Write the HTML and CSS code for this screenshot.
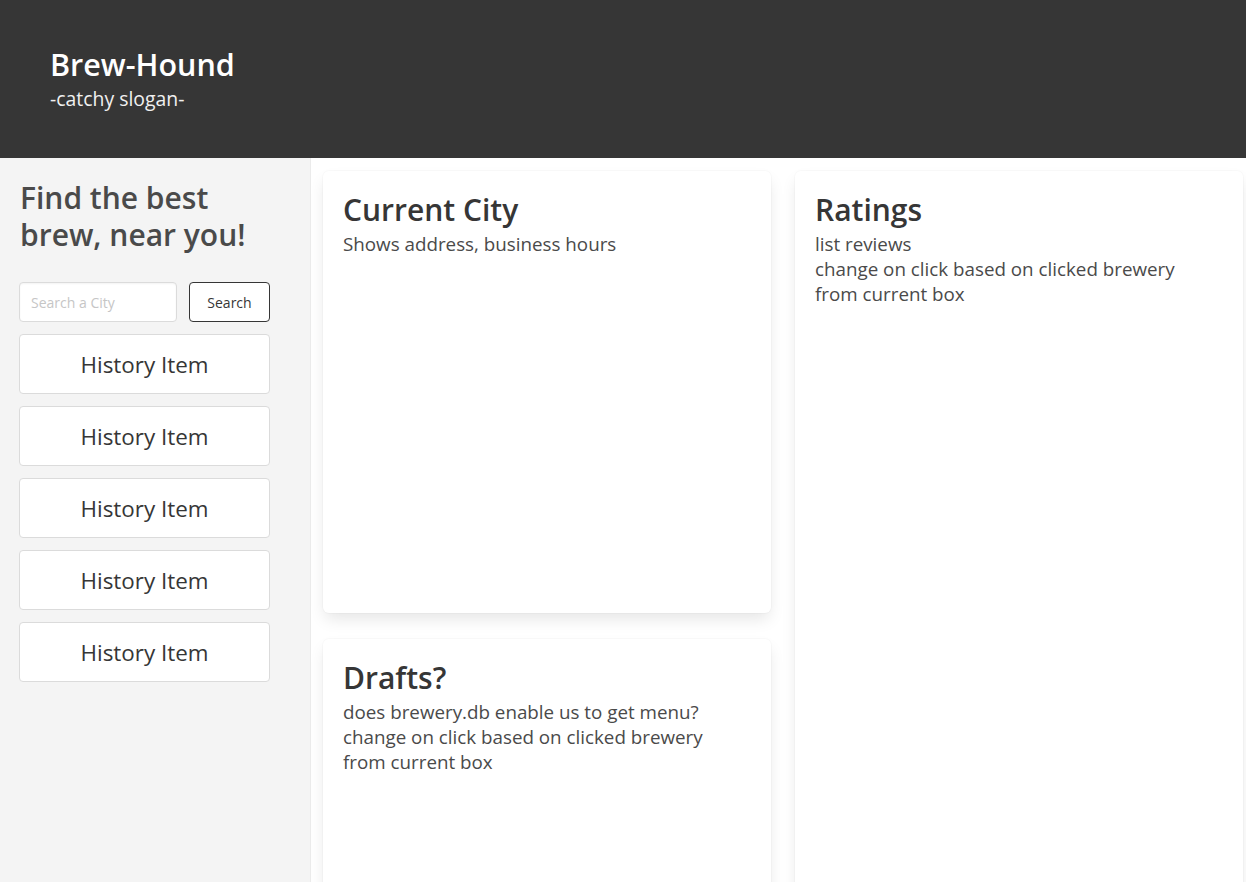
FILE: index.html
```html
<!DOCTYPE html>
<html lang="en">
<head>
<meta charset="utf-8">
<title>Brew-Hound</title>
<link rel="stylesheet" href="styles.css">
</head>
<body>
<header class="hero">
  <h1 class="hero-title">Brew-Hound</h1>
  <p class="hero-subtitle">-catchy slogan-</p>
</header>
<div class="layout">
  <aside class="sidebar">
    <h2 class="side-title">Find the best brew, near you!</h2>
    <form class="search">
      <input class="search-input" type="text" placeholder="Search a City">
      <button class="search-btn" type="button">Search</button>
    </form>
    <ul class="history">
      <li class="history-item">History Item</li>
      <li class="history-item">History Item</li>
      <li class="history-item">History Item</li>
      <li class="history-item">History Item</li>
      <li class="history-item">History Item</li>
    </ul>
  </aside>
  <main class="main">
    <div class="col">
      <section class="box box-city">
        <h3 class="box-title">Current City</h3>
        <p class="box-text">Shows address, business hours</p>
      </section>
      <section class="box box-drafts">
        <h3 class="box-title">Drafts?</h3>
        <p class="box-text">does brewery.db enable us to get menu?<br>change on click based on clicked brewery from current box</p>
      </section>
    </div>
    <div class="col">
      <section class="box box-ratings">
        <h3 class="box-title">Ratings</h3>
        <p class="box-text">list reviews<br>change on click based on clicked brewery from current box</p>
      </section>
    </div>
  </main>
</div>
</body>
</html>
```
FILE: styles.css
```css
* { box-sizing: border-box; }
html, body { margin: 0; padding: 0; }
body {
  font-family: "Open Sans", "Noto Sans", "Liberation Sans", sans-serif;
  color: #4a4a4a;
  background: #fff;
  height: 882px;
  overflow: hidden;
}
.hero {
  background: #363636;
  height: 158px;
  padding: 46px 50px 0;
}
.hero-title {
  margin: 0;
  color: #fff;
  font-size: 30.5px;
  font-weight: 600;
  line-height: 36px;
}
.hero-subtitle {
  margin: 4px 0 0;
  color: #f0f0f0;
  font-size: 19.4px;
  line-height: 25px;
}
.layout {
  display: flex;
  height: 724px;
  overflow: hidden;
}
.sidebar {
  width: 311px;
  flex: none;
  background: #f4f4f4;
  border-right: 1px solid #ebebeb;
  padding: 21px 40px 0 19px;
}
.side-title {
  margin: 0;
  font-size: 30px;
  font-weight: 600;
  line-height: 37px;
  color: #4a4a4a;
  padding-left: 1px;
}
.search {
  display: flex;
  gap: 12px;
  margin-top: 29px;
}
.search-input {
  width: 158px;
  height: 40px;
  border: 1px solid #dbdbdb;
  border-radius: 4px;
  background: #fff;
  padding: 0 11px;
  font-family: inherit;
  font-size: 14px;
  color: #363636;
  box-shadow: inset 0 1px 2px rgba(10,10,10,.05);
}
.search-input::placeholder { color: #c6c6c6; }
.search-btn {
  width: 81px;
  height: 40px;
  border: 1px solid #363636;
  border-radius: 4px;
  background: #fff;
  font-family: inherit;
  font-size: 14px;
  color: #363636;
  padding: 0;
}
.history {
  list-style: none;
  margin: 12px 0 0;
  padding: 0;
  display: flex;
  flex-direction: column;
  gap: 12px;
}
.history-item {
  width: 251px;
  height: 60px;
  background: #fff;
  border: 1px solid #dbdbdb;
  border-radius: 4px;
  display: flex;
  align-items: center;
  justify-content: center;
  font-size: 22.4px;
  color: #363636;
  padding-top: 1px;
}
.main {
  flex: 1;
  display: flex;
  gap: 24px;
  padding: 13px 0 0 12px;
  background: #fff;
}
.col {
  width: 448px;
  flex: none;
  display: flex;
  flex-direction: column;
  gap: 26px;
}
.box {
  flex: none;
  background: #fff;
  border-radius: 6px;
  box-shadow: 0 8px 16px -2px rgba(10,10,10,.1), 0 0 0 1px rgba(10,10,10,.02);
  padding: 20px 34px 20px 20px;
}
.box-city { height: 442px; }
.box-drafts { height: 260px; }
.box-ratings { height: 728px; }
.box-title {
  margin: 0;
  font-size: 30px;
  font-weight: 600;
  line-height: 38px;
  color: #363636;
}
.box-text {
  margin: 3px 0 0;
  font-size: 18.8px;
  line-height: 25px;
  color: #4a4a4a;
}
```
